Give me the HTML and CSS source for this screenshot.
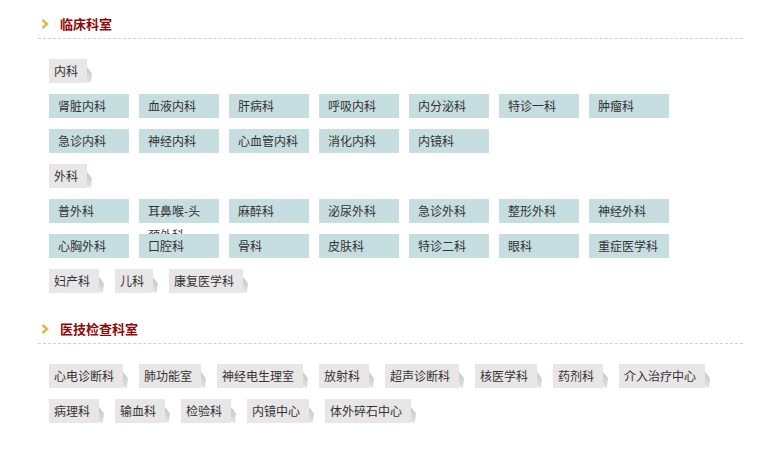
FILE: index.html
```html
<!DOCTYPE html>
<html lang="zh-CN">
<head>
<meta charset="utf-8">
<title>科室导航</title>
<link rel="stylesheet" href="styles.css">
</head>
<body>
<div class="wrap">
  <section class="dept">
    <h2 class="dept-head">
      <svg class="chev" width="8" height="10" viewBox="0 0 8 10"><polyline points="1.5,1 6,5 1.5,9" fill="none" stroke="#e2b648" stroke-width="2.4"/></svg>
      <span>临床科室</span>
    </h2>
    <div class="dept-body">
      <div class="tags"><span class="tag">内科</span></div>
      <div class="cells">
        <span class="cell">肾脏内科</span>
        <span class="cell">血液内科</span>
        <span class="cell">肝病科</span>
        <span class="cell">呼吸内科</span>
        <span class="cell">内分泌科</span>
        <span class="cell">特诊一科</span>
        <span class="cell">肿瘤科</span>
        <span class="cell">急诊内科</span>
        <span class="cell">神经内科</span>
        <span class="cell">心血管内科</span>
        <span class="cell">消化内科</span>
        <span class="cell">内镜科</span>
      </div>
      <div class="tags"><span class="tag">外科</span></div>
      <div class="cells">
        <span class="cell">普外科</span>
        <span class="cell">耳鼻喉-头颈外科</span>
        <span class="cell">麻醉科</span>
        <span class="cell">泌尿外科</span>
        <span class="cell">急诊外科</span>
        <span class="cell">整形外科</span>
        <span class="cell">神经外科</span>
        <span class="cell">心胸外科</span>
        <span class="cell">口腔科</span>
        <span class="cell">骨科</span>
        <span class="cell">皮肤科</span>
        <span class="cell">特诊二科</span>
        <span class="cell">眼科</span>
        <span class="cell">重症医学科</span>
      </div>
      <div class="tags">
        <span class="tag">妇产科</span>
        <span class="tag">儿科</span>
        <span class="tag">康复医学科</span>
      </div>
    </div>
  </section>
  <section class="dept">
    <h2 class="dept-head">
      <svg class="chev" width="8" height="10" viewBox="0 0 8 10"><polyline points="1.5,1 6,5 1.5,9" fill="none" stroke="#e2b648" stroke-width="2.4"/></svg>
      <span>医技检查科室</span>
    </h2>
    <div class="dept-body">
      <div class="tags">
        <span class="tag">心电诊断科</span>
        <span class="tag">肺功能室</span>
        <span class="tag">神经电生理室</span>
        <span class="tag">放射科</span>
        <span class="tag">超声诊断科</span>
        <span class="tag">核医学科</span>
        <span class="tag">药剂科</span>
        <span class="tag">介入治疗中心</span>
        <span class="tag">病理科</span>
        <span class="tag">输血科</span>
        <span class="tag">检验科</span>
        <span class="tag">内镜中心</span>
        <span class="tag">体外碎石中心</span>
      </div>
    </div>
  </section>
</div>
</body>
</html>
```
FILE: styles.css
```css
html, body {
  margin: 0;
  padding: 0;
  background: #fff;
}

body {
  font-family: "Noto Sans CJK SC", "Liberation Sans", sans-serif;
  font-size: 12px;
  color: #333;
}

.wrap {
  width: 705px;
  margin-left: 38px;
  padding-top: 9px;
}

/* section title with gold chevron and dashed rule */
.dept-head {
  display: flex;
  align-items: center;
  height: 29px;
  margin: 0;
  padding-left: 3px;
  border-bottom: 1px dashed #cfcfcf;
  font-size: 13px;
  font-weight: bold;
  color: #8e0a0a;
}

.chev {
  display: block;
  margin-right: 11px;
}

.dept-body {
  padding: 20px 0 10px 11px;
}

/* grey label tags with a folded tail */
.tags {
  display: flex;
  flex-wrap: wrap;
  gap: 11px 16px;
  margin-bottom: 11px;
}

.tag {
  position: relative;
  display: block;
  height: 24px;
  line-height: 24px;
  padding: 0 9px 0 5px;
  background: #e8e6e6;
  white-space: nowrap;
}

.tag::after {
  content: "";
  position: absolute;
  right: -5px;
  top: 8px;
  width: 5px;
  height: 16px;
  background: linear-gradient(#c4c4c4, #e4e4e4);
  clip-path: polygon(0 0, 100% 40%, 75% 100%, 0 90%);
}

/* teal department cells */
.cells {
  display: flex;
  flex-wrap: wrap;
  gap: 11px 10px;
  margin-bottom: 11px;
}

.cell {
  display: block;
  box-sizing: border-box;
  width: 80px;
  height: 24px;
  line-height: 24px;
  padding: 0 9px;
  background: #c6dee0;
}
```
